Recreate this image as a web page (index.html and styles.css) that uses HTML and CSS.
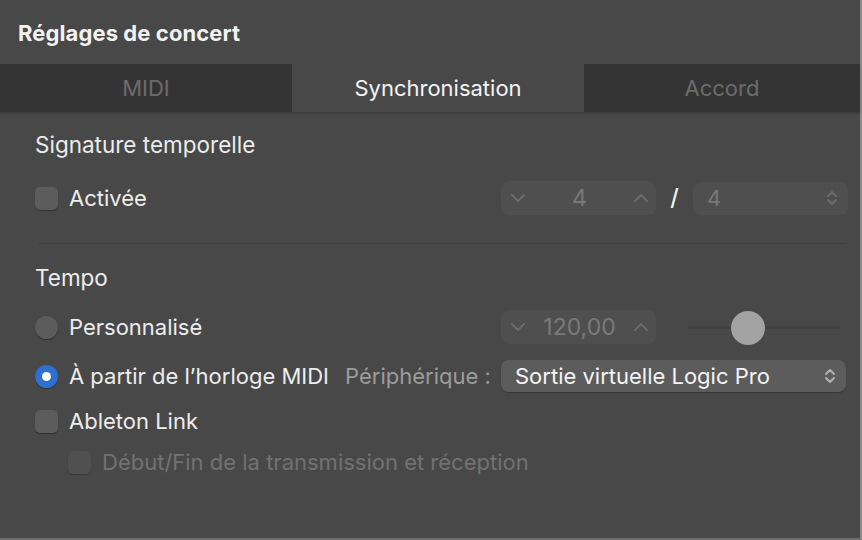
FILE: index.html
```html
<!DOCTYPE html>
<html lang="fr">
<head>
<meta charset="utf-8">
<title>Réglages de concert</title>
<link rel="stylesheet" href="styles.css">
</head>
<body>
<div class="window">
  <header class="header">Réglages de concert</header>
  <nav class="tabs">
    <div class="tab">MIDI</div>
    <div class="tab active">Synchronisation</div>
    <div class="tab">Accord</div>
  </nav>
  <main class="content">
    <div class="section-title first">Signature temporelle</div>
    <div class="row row-sig">
      <div class="left">
        <span class="checkbox"></span>
        <span class="label">Activée</span>
      </div>
      <div class="right">
        <div class="stepper">
          <svg class="chev" viewBox="0 0 14 8" width="14" height="8"><polyline points="1,1 7,7 13,1"/></svg>
          <span class="val">4</span>
          <svg class="chev" viewBox="0 0 14 8" width="14" height="8"><polyline points="1,7 7,1 13,7"/></svg>
        </div>
        <span class="slash">/</span>
        <div class="popup dim">
          <span class="val">4</span>
          <svg class="updown" viewBox="0 0 10 16" width="10" height="16"><polyline points="1,6 5,2 9,6"/><polyline points="1,10 5,14 9,10"/></svg>
        </div>
      </div>
    </div>
    <div class="separator"></div>
    <div class="section-title">Tempo</div>
    <div class="row row-custom">
      <div class="left">
        <span class="radio"></span>
        <span class="label">Personnalisé</span>
      </div>
      <div class="right">
        <div class="stepper">
          <svg class="chev" viewBox="0 0 14 8" width="14" height="8"><polyline points="1,1 7,7 13,1"/></svg>
          <span class="val">120,00</span>
          <svg class="chev" viewBox="0 0 14 8" width="14" height="8"><polyline points="1,7 7,1 13,7"/></svg>
        </div>
        <div class="slider">
          <div class="track"></div>
          <div class="knob"></div>
        </div>
      </div>
    </div>
    <div class="row row-midi">
      <div class="left">
        <span class="radio on"></span>
        <span class="label">À partir de l’horloge MIDI</span>
        <span class="device">Périphérique :</span>
      </div>
      <div class="right">
        <div class="popup bright">
          <span class="val">Sortie virtuelle Logic Pro</span>
          <svg class="updown" viewBox="0 0 10 16" width="10" height="16"><polyline points="1,6 5,2 9,6"/><polyline points="1,10 5,14 9,10"/></svg>
        </div>
      </div>
    </div>
    <div class="row row-link">
      <div class="left">
        <span class="checkbox"></span>
        <span class="label">Ableton Link</span>
      </div>
    </div>
    <div class="row row-sub">
      <div class="left indent">
        <span class="checkbox disabled"></span>
        <span class="label muted">Début/Fin de la transmission et réception</span>
      </div>
    </div>
  </main>
</div>
</body>
</html>
```
FILE: styles.css
```css
* { box-sizing: border-box; }
html, body { margin: 0; padding: 0; }
body {
  width: 862px;
  height: 540px;
  background: #484848;
  font-family: Inter, "Noto Sans", sans-serif;
  color: #ededed;
  overflow: hidden;
}
.window {
  width: 862px;
  height: 540px;
  background: #484848;
  border-right: 2px solid #8c8c8c;
  border-bottom: 2px solid #6e6e6e;
  display: flex;
  flex-direction: column;
}
.header {
  height: 64px;
  padding: 19px 0 0 18px;
  font-size: 22px;
  font-weight: 700;
  color: #f2f2f2;
  line-height: 28px;
  letter-spacing: 0.1px;
}
.tabs {
  height: 48px;
  display: flex;
  background: #343434;
  box-shadow: 0 2px 2px rgba(0,0,0,0.18);
  position: relative;
  z-index: 1;
}
.tab {
  flex: 0 0 292px;
  display: flex;
  align-items: center;
  justify-content: center;
  font-size: 22px;
  color: #6c6c6c;
}
.tab:last-child { flex: 1 1 auto; }
.tab.active {
  background: #484848;
  color: #f4f4f4;
}
.content {
  padding: 0 14px 0 35px;
  display: flex;
  flex-direction: column;
}
.section-title {
  font-size: 22.5px;
  line-height: 26px;
  height: 26px;
  margin-top: 21px;
  color: #ececec;
}
.section-title.first { margin-top: 20px; }
.row {
  display: flex;
  align-items: center;
}
.left {
  width: 466px;
  flex: none;
  display: flex;
  align-items: center;
  white-space: nowrap;
}
.left.indent { width: auto; padding-left: 33px; }
.right {
  flex: 1;
  display: flex;
  align-items: center;
}
.label {
  font-size: 22px;
  margin-left: 11px;
  color: #ededed;
}
.label.muted { color: #727272; }
.device {
  font-size: 22px;
  color: #9c9c9c;
  margin-left: 16px;
}
.checkbox {
  width: 23px;
  height: 23px;
  border-radius: 5px;
  background: #5c5c5c;
  box-shadow: 0 1px 1px rgba(0,0,0,0.35);
  flex: none;
}
.checkbox.disabled {
  background: #505050;
  box-shadow: 0 1px 1px rgba(0,0,0,0.2);
}
.radio {
  width: 23px;
  height: 23px;
  border-radius: 50%;
  background: #5c5c5c;
  box-shadow: 0 1px 1px rgba(0,0,0,0.35);
  flex: none;
  display: flex;
  align-items: center;
  justify-content: center;
}
.radio.on { background: #2d6fd2; }
.radio.on::after {
  content: "";
  width: 9px;
  height: 9px;
  border-radius: 50%;
  background: #ffffff;
}
.row-sig { height: 34px; margin-top: 23px; }
.row-custom { height: 34px; margin-top: 19px; }
.row-midi { height: 32px; margin-top: 16px; }
.row-link { height: 28px; margin-top: 15px; }
.row-sub { height: 28px; margin-top: 13px; }
.separator {
  height: 1px;
  background: #414141;
  margin: 28px 0 0 3px;
}
.stepper {
  width: 155px;
  height: 34px;
  border-radius: 8px;
  background: #4f4f4f;
  display: flex;
  align-items: center;
  justify-content: space-between;
  padding: 0 8px 0 10px;
  font-size: 23px;
  color: #7a7a7a;
}
.chev, .updown {
  fill: none;
  stroke: #6c6c6c;
  stroke-width: 1.8;
  stroke-linecap: round;
  stroke-linejoin: round;
  flex: none;
}
.slash {
  width: 37px;
  text-align: center;
  font-size: 23px;
  color: #f0f0f0;
  font-weight: 500;
}
.popup {
  height: 33px;
  border-radius: 8px;
  display: flex;
  align-items: center;
  justify-content: space-between;
  padding: 0 11px 0 14px;
  font-size: 22px;
}
.popup.dim {
  width: 155px;
  background: #4f4f4f;
  color: #7a7a7a;
}
.popup.bright {
  width: 345px;
  height: 32px;
  background: #5c5c5c;
  color: #f4f4f4;
  box-shadow: 0 1px 1px rgba(0,0,0,0.25);
}
.popup.bright .updown { stroke: #b4b4b4; }
.slider {
  position: relative;
  width: 154px;
  height: 34px;
  margin-left: 31px;
}
.track {
  position: absolute;
  left: 0;
  right: 0;
  top: 16px;
  height: 3px;
  border-radius: 2px;
  background: #414141;
}
.knob {
  position: absolute;
  left: 44px;
  top: 1px;
  width: 34px;
  height: 34px;
  border-radius: 50%;
  background: #a3a3a3;
}
```
